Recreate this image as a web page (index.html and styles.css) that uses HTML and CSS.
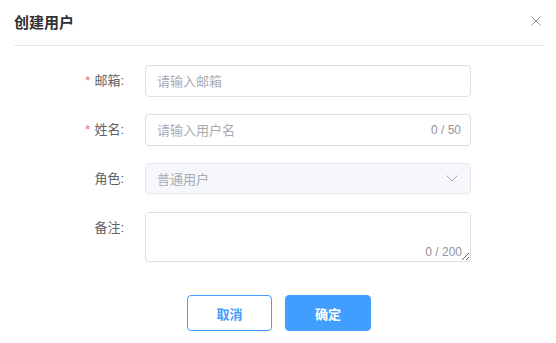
FILE: index.html
```html
<!DOCTYPE html>
<html lang="zh-CN">
<head>
<meta charset="utf-8">
<title>创建用户</title>
<link rel="stylesheet" href="styles.css">
</head>
<body>
<div class="dialog">
  <div class="header">
    <span class="title">创建用户</span>
    <button class="close" aria-label="关闭">
      <svg width="10" height="10" viewBox="0 0 10 10"><path d="M0.5 0.5L9.5 9.5M9.5 0.5L0.5 9.5" stroke="#909399" stroke-width="1" fill="none"/></svg>
    </button>
  </div>
  <form class="form">
    <div class="row">
      <label class="label"><span class="req">*</span>邮箱:</label>
      <div class="control">
        <input class="input" type="text" placeholder="请输入邮箱">
      </div>
    </div>
    <div class="row">
      <label class="label"><span class="req">*</span>姓名:</label>
      <div class="control">
        <input class="input" type="text" placeholder="请输入用户名">
        <span class="count">0 / 50</span>
      </div>
    </div>
    <div class="row">
      <label class="label">角色:</label>
      <div class="control">
        <div class="select">
          <span>普通用户</span>
          <svg width="12" height="7" viewBox="0 0 12 7"><path d="M0.5 0.5L6 6L11.5 0.5" stroke="#a8abb2" stroke-width="1" fill="none"/></svg>
        </div>
      </div>
    </div>
    <div class="row">
      <label class="label">备注:</label>
      <div class="control">
        <textarea class="textarea"></textarea>
        <span class="count count-area">0 / 200</span>
      </div>
    </div>
  </form>
  <div class="footer">
    <button class="btn btn-plain">取消</button>
    <button class="btn btn-primary">确定</button>
  </div>
</div>
</body>
</html>
```

FILE: styles.css
```css
* { box-sizing: border-box; }
html, body { margin: 0; padding: 0; background: #fff; }
body {
  font-family: "Liberation Sans", "Noto Sans CJK SC", sans-serif;
  width: 556px;
  height: 343px;
  overflow: hidden;
}
.dialog { width: 556px; }
.header {
  display: flex;
  align-items: center;
  justify-content: space-between;
  margin: 0 12px 0 14px;
  padding: 14px 3px 13px 0;
  border-bottom: 1px solid #e4e7ed;
}
.title {
  font-size: 15px;
  line-height: 18px;
  font-weight: 600;
  color: #303133;
}
.close {
  border: 0;
  padding: 0;
  background: none;
  width: 10px;
  height: 10px;
  display: flex;
  margin-top: -4px;
}
.form {
  padding-top: 19px;
  display: flex;
  flex-direction: column;
  gap: 17px;
}
.row {
  display: flex;
  align-items: flex-start;
}
.label {
  width: 133px;
  padding-right: 9px;
  text-align: right;
  font-size: 13px;
  line-height: 32px;
  color: #606266;
}
.req {
  color: #f56c6c;
  margin-right: 4px;
}
.control {
  position: relative;
  margin-left: 12px;
  width: 326px;
}
.input {
  display: block;
  width: 100%;
  height: 32px;
  border: 1px solid #dcdfe6;
  border-radius: 4px;
  padding: 0 11px;
  font-family: inherit;
  font-size: 13px;
  color: #606266;
  outline: none;
}
.input::placeholder, .textarea::placeholder { color: #a8abb2; }
.count {
  position: absolute;
  right: 10px;
  top: 0;
  line-height: 32px;
  font-size: 12px;
  color: #909399;
}
.select {
  height: 31px;
  border: 1px solid #e4e7ed;
  border-radius: 4px;
  background: #f5f7fa;
  padding: 0 12px 0 11px;
  display: flex;
  align-items: center;
  justify-content: space-between;
  font-size: 13px;
  color: #a8abb2;
}
.textarea {
  display: block;
  width: 100%;
  height: 50px;
  border: 1px solid #dcdfe6;
  border-radius: 4px;
  padding: 5px 11px;
  font-family: inherit;
  font-size: 13px;
  resize: vertical;
  outline: none;
  margin: 0;
}
.count-area {
  top: auto;
  bottom: 3px;
  right: 9px;
  line-height: 14px;
}
.footer {
  display: flex;
  justify-content: center;
  gap: 13px;
  padding-top: 33px;
  padding-left: 2px;
}
.btn {
  width: 85px;
  height: 36px;
  border-radius: 4px;
  font-family: inherit;
  font-size: 13px;
  font-weight: 700;
  border: 1px solid #409eff;
  padding: 0;
}
.btn-plain { background: #fff; color: #409eff; }
.btn-primary { background: #409eff; color: #fff; width: 86px; }
```
